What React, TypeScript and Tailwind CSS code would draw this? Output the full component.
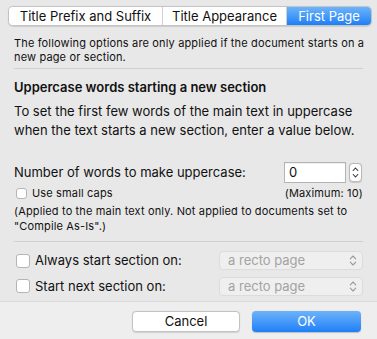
import { useState } from "react";

const font = { fontFamily: 'Inter, "Liberation Sans", Arial, sans-serif' };

function Stepper() {
  return (
    <div className="flex h-[19px] w-[13px] flex-col items-center justify-center rounded-[4px] border border-[#b9b9b9] bg-white shadow-[0_0.5px_1px_rgba(0,0,0,0.15)]">
      <svg width="7" height="13" viewBox="0 0 7 13" fill="none" stroke="#333" strokeWidth="1.1" strokeLinecap="round" strokeLinejoin="round">
        <path d="M1.2 4.5 L3.5 2 L5.8 4.5" />
        <path d="M1.2 8.5 L3.5 11 L5.8 8.5" />
      </svg>
    </div>
  );
}

function Chevrons() {
  return (
    <svg width="8" height="13" viewBox="0 0 8 13" fill="none" stroke="#9a9a9a" strokeWidth="1.1" strokeLinecap="round" strokeLinejoin="round">
      <path d="M1.3 4.8 L4 2 L6.7 4.8" />
      <path d="M1.3 8.2 L4 11 L6.7 8.2" />
    </svg>
  );
}

function Check({ small }: { small?: boolean }) {
  return (
    <span
      className={
        small
          ? "h-[11px] w-[11px] shrink-0 rounded-[3px] border border-[#b5b5b5] bg-white"
          : "h-[14px] w-[14px] shrink-0 rounded-[3px] border border-[#b5b5b5] bg-white"
      }
    />
  );
}

function DisabledSelect() {
  return (
    <div className="flex h-[19px] w-[144px] items-center justify-between rounded-[4px] border border-[#dcdcdc] bg-[#efefef] pl-[8px] pr-[5px] text-[13px] text-[#a3a3a3]">
      <span>a recto page</span>
      <Chevrons />
    </div>
  );
}

export default function App() {
  const [tab, setTab] = useState(2);
  const tabs = ["Title Prefix and Suffix", "Title Appearance", "First Page"];
  const widths = ["w-[153px]", "w-[124px]", "w-[85px]"];

  return (
    <div className="flex h-[339px] w-[377px] flex-col bg-[#e8e8e8] text-[#111]" style={font}>
      <div className="relative h-[301px] px-[14px] pt-[6px]">
        {/* segmented tabs */}
        <div className="absolute left-[8px] top-[6px] flex h-[20px] overflow-hidden rounded-[5px] border border-[#c4c4c4] bg-white text-[13px] shadow-[0_0.5px_1px_rgba(0,0,0,0.12)]">
          {tabs.map((t, i) => (
            <button
              key={t}
              onClick={() => setTab(i)}
              className={
                (tab === i
                  ? "bg-gradient-to-b from-[#6cb3fa] to-[#1a7ff7] text-white"
                  : "bg-white text-[#111]") +
                " flex items-center justify-center leading-none " +
                widths[i] +
                (i > 0 ? " border-l border-[#d0d0d0]" : "")
              }
            >
              {t}
            </button>
          ))}
        </div>

        <div className="pt-[30px]">
          <p className="whitespace-nowrap text-[11px] leading-[14px] tracking-[0.15px]">
            The following options are only applied if the document starts on a
            <br />
            new page or section.
          </p>
          <div className="mt-[4px] h-px bg-[#cfcfcf]" />

          <p className="mt-[10px] text-[13px] font-semibold leading-[16px]">Uppercase words starting a new section</p>
          <p className="mt-[7px] text-[13px] leading-[19px]">
            To set the first few words of the main text in uppercase when the text starts a new section, enter a value below.
          </p>

          <div className="mt-[22px] flex items-center">
            <span className="flex-1 text-[13px]">Number of words to make uppercase:</span>
            <div className="flex h-[21px] w-[62px] items-center border border-[#b4b4b4] bg-white pl-[4px] text-[13px] shadow-[inset_0_1px_0_rgba(0,0,0,0.06)]">
              0
            </div>
            <div className="ml-[3px] mr-[1px]">
              <Stepper />
            </div>
          </div>

          <div className="mt-[4px] flex items-center justify-between pl-[2px] text-[11px] leading-[13px] tracking-[0.15px]">
            <label className="flex items-center gap-[5px]">
              <Check small />
              <span>Use small caps</span>
            </label>
            <span>(Maximum: 10)</span>
          </div>

          <p className="mt-[4px] text-[11px] leading-[15px] tracking-[0.15px]">
            (Applied to the main text only. Not applied to documents set to
            <br />
            "Compile As-Is".)
          </p>
          <div className="mt-[7px] h-px bg-[#cfcfcf]" />

          <div className="mt-[9px] flex items-center justify-between pl-[2px] text-[13px]">
            <label className="flex items-center gap-[5px]">
              <Check />
              <span>Always start section on:</span>
            </label>
            <DisabledSelect />
          </div>
          <div className="mt-[6px] flex items-center justify-between pl-[2px] text-[13px]">
            <label className="flex items-center gap-[5px]">
              <Check />
              <span>Start next section on:</span>
            </label>
            <DisabledSelect />
          </div>
        </div>
      </div>

      <div className="flex flex-1 justify-end gap-[12px] border-t border-[#dadada] bg-[#eeeeee] pr-[16px] pt-[9px]">
        <button className="h-[21px] w-[108px] rounded-[4px] border border-[#c3c3c3] bg-white text-[13px] leading-none text-[#111] shadow-[0_0.5px_1px_rgba(0,0,0,0.12)]">
          Cancel
        </button>
        <button className="h-[21px] w-[109px] rounded-[4px] bg-gradient-to-b from-[#6cb3fa] to-[#1a7ff7] text-[13px] leading-none text-white shadow-[0_0.5px_1px_rgba(0,0,0,0.2)]">
          OK
        </button>
      </div>
    </div>
  );
}
